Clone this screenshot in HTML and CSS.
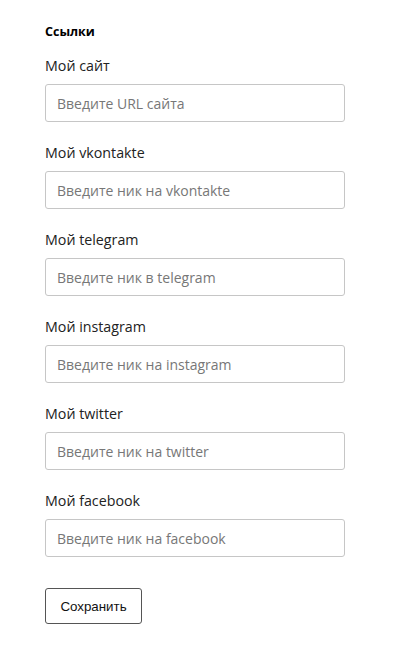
FILE: index.html
```html
<!DOCTYPE html>
<html lang="ru">
<head>
<meta charset="utf-8">
<link rel="stylesheet" href="styles.css">
</head>
<body>
<form class="links">
  <h2 class="title">Ссылки</h2>
  <div class="field">
    <label class="label">Мой сайт</label>
    <input class="input" type="text" placeholder="Введите URL сайта">
  </div>
  <div class="field">
    <label class="label">Мой vkontakte</label>
    <input class="input" type="text" placeholder="Введите ник на vkontakte">
  </div>
  <div class="field">
    <label class="label">Мой telegram</label>
    <input class="input" type="text" placeholder="Введите ник в telegram">
  </div>
  <div class="field">
    <label class="label">Мой instagram</label>
    <input class="input" type="text" placeholder="Введите ник на instagram">
  </div>
  <div class="field">
    <label class="label">Мой twitter</label>
    <input class="input" type="text" placeholder="Введите ник на twitter">
  </div>
  <div class="field">
    <label class="label">Мой facebook</label>
    <input class="input" type="text" placeholder="Введите ник на facebook">
  </div>
  <button class="save" type="button">Сохранить</button>
</form>
</body>
</html>
```
FILE: styles.css
```css
html, body {
  margin: 0;
  padding: 0;
  background: #fff;
}
body {
  font-family: "Open Sans", "Noto Sans", sans-serif;
  color: #222;
}
.links {
  display: flex;
  flex-direction: column;
  align-items: flex-start;
  padding: 23px 0 0 45px;
}
.title {
  margin: 0 0 15px;
  font-size: 12.5px;
  line-height: 18px;
  font-weight: 700;
  color: #000;
}
.field {
  display: flex;
  flex-direction: column;
  gap: 8px;
  margin-bottom: 21px;
}
.label {
  font-size: 14.25px;
  line-height: 20px;
  color: #222;
}
.input {
  box-sizing: border-box;
  width: 300px;
  height: 38px;
  margin: 0;
  padding: 0 11px;
  border: 1px solid #c6c6c6;
  border-radius: 3px;
  font-family: inherit;
  font-size: 14px;
  color: #222;
  outline: none;
}
.input::placeholder {
  color: #777;
}
.save {
  box-sizing: border-box;
  margin-top: 10px;
  width: 97px;
  height: 36px;
  padding: 0;
  background: #fff;
  border: 1px solid #555;
  border-radius: 3px;
  font-family: "Liberation Sans", Arial, sans-serif;
  font-size: 13.33px;
  color: #111;
}
```
